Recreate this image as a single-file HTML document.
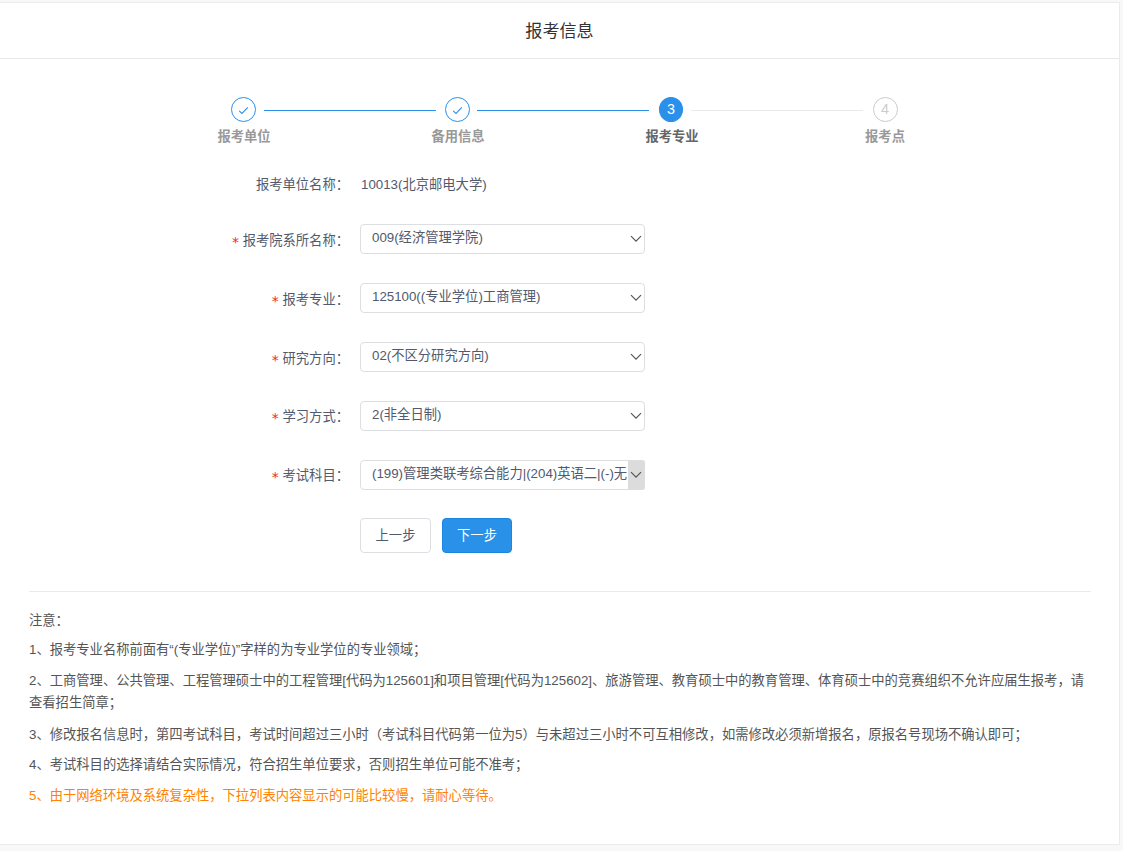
<!DOCTYPE html>
<html lang="zh-CN">
<head>
<meta charset="utf-8">
<title>报考信息</title>
<style>
*{box-sizing:border-box;margin:0;padding:0}
html,body{width:1123px;height:851px;overflow:hidden}
body{background:#f8f8f8;font-family:"Liberation Sans","Noto Sans CJK SC",sans-serif;font-size:13.3px;color:#515a6e;position:relative}
.card{position:absolute;left:-1px;top:2px;width:1121px;height:843px;background:#fff;border:1px solid #ebebeb}
.hd{position:absolute;left:0;top:0;width:1119px;height:54px;border-bottom:1px solid #e8e8e8;text-align:center;font-size:17.1px;line-height:54px;color:#333}
.abs{position:absolute}
/* steps */
.circle{position:absolute;width:25px;height:25px;border-radius:50%;border:1px solid #2b90ea;background:#fff;top:97px;text-align:center;line-height:23px;font-size:14.3px;color:#2b90ea}
.circle.cur{background:#2b90ea;color:#fff}
.circle.wait{border-color:#ccc;color:#ccc}
.line{position:absolute;height:1px;top:110px;background:#2b90ea}
.line.wait{background:#e8eaec}
.slabel{position:absolute;top:127px;width:120px;text-align:center;font-weight:bold;font-size:13.3px;line-height:20px;color:#999}
.slabel.cur{color:#666}
.circle svg{position:absolute;left:6px;top:8px}
/* form */
.lab{position:absolute;left:150px;width:199px;text-align:right;line-height:20px;font-size:13.3px;color:#515a6e;white-space:nowrap}
.lab i{font-style:normal;color:#f22a2a;font-family:"DejaVu Sans",sans-serif;font-size:14px;line-height:1;margin-right:3.7px;position:relative;top:2px}
.val{position:absolute;left:361px;line-height:20px}
.sel{position:absolute;left:360px;width:285px;height:30px;border:1px solid #dcdee2;border-radius:4px;background:#fff;overflow:hidden}
.sel span{position:absolute;left:11px;top:3px;line-height:20px;white-space:nowrap}
.sel svg{position:absolute;right:2px;top:10px}
.sel .gray{position:absolute;right:0;top:0;width:16px;height:100%;background:#dcdcdc}
.btn{position:absolute;top:518px;height:35px;line-height:33px;border:1px solid #dcdee2;border-radius:4px;padding:0;text-align:center;font-size:13.3px;background:#fff;color:#515a6e}
.btn.pri{background:#2a91e8;border-color:#1b86e1;color:#fff}
.hr{position:absolute;left:29px;top:591px;width:1062px;height:1px;background:#e8eaec}
.note{position:absolute;left:29px;width:1062px;line-height:22px;font-size:13.3px;color:#555}
.note.o{color:#ff8200}
</style>
</head>
<body>
<div class="card"></div>
<div class="hd" style="top:5px">报考信息</div>

<!-- steps -->
<div class="line" style="left:264px;width:172px"></div>
<div class="line" style="left:477px;width:172px"></div>
<div class="line wait" style="left:691px;width:172px"></div>

<div class="circle" style="left:231px"><svg width="11" height="9" viewBox="0 0 11 9"><path d="M1.2 4.8 L4 7.4 L9.8 1.4" fill="none" stroke="#2b90ea" stroke-width="1.1"/></svg></div>
<div class="circle" style="left:445px"><svg width="11" height="9" viewBox="0 0 11 9"><path d="M1.2 4.8 L4 7.4 L9.8 1.4" fill="none" stroke="#2b90ea" stroke-width="1.1"/></svg></div>
<div class="circle cur" style="left:658.8px;width:24.4px">3</div>
<div class="circle wait" style="left:872.5px">4</div>

<div class="slabel" style="left:184px">报考单位</div>
<div class="slabel" style="left:398px">备用信息</div>
<div class="slabel cur" style="left:612px">报考专业</div>
<div class="slabel" style="left:825px">报考点</div>

<!-- form -->
<div class="lab" style="top:175px">报考单位名称：</div>
<div class="val" style="top:175px">10013(北京邮电大学)</div>

<div class="lab" style="top:231px"><i>*</i>报考院系所名称：</div>
<div class="sel" style="top:224px"><span>009(经济管理学院)</span><svg width="12" height="8" viewBox="0 0 12 8"><path d="M1 1.2 L6 6.2 L11 1.2" fill="none" stroke="#555" stroke-width="1.2"/></svg></div>

<div class="lab" style="top:290px"><i>*</i>报考专业：</div>
<div class="sel" style="top:283px"><span>125100((专业学位)工商管理)</span><svg width="12" height="8" viewBox="0 0 12 8"><path d="M1 1.2 L6 6.2 L11 1.2" fill="none" stroke="#555" stroke-width="1.2"/></svg></div>

<div class="lab" style="top:349px"><i>*</i>研究方向：</div>
<div class="sel" style="top:342px"><span>02(不区分研究方向)</span><svg width="12" height="8" viewBox="0 0 12 8"><path d="M1 1.2 L6 6.2 L11 1.2" fill="none" stroke="#555" stroke-width="1.2"/></svg></div>

<div class="lab" style="top:407px"><i>*</i>学习方式：</div>
<div class="sel" style="top:401px"><span>2(非全日制)</span><svg width="12" height="8" viewBox="0 0 12 8"><path d="M1 1.2 L6 6.2 L11 1.2" fill="none" stroke="#555" stroke-width="1.2"/></svg></div>

<div class="lab" style="top:466px"><i>*</i>考试科目：</div>
<div class="sel" style="top:460px;border-radius:4px 2px 2px 4px"><span>(199)管理类联考综合能力|(204)英语二|(-)无|(-)无</span><div class="gray"></div><svg width="12" height="8" viewBox="0 0 12 8"><path d="M1 1.2 L6 6.2 L11 1.2" fill="none" stroke="#555" stroke-width="1.2"/></svg></div>

<div class="btn" style="left:360px;width:71px">上一步</div>
<div class="btn pri" style="left:442px;width:70px">下一步</div>

<div class="hr"></div>

<div class="note" style="top:610px">注意：</div>
<div class="note" style="top:639px">1、报考专业名称前面有“(专业学位)”字样的为专业学位的专业领域；</div>
<div class="note" style="top:670px">2、工商管理、公共管理、工程管理硕士中的工程管理[代码为125601]和项目管理[代码为125602]、旅游管理、教育硕士中的教育管理、体育硕士中的竞赛组织不允许应届生报考，请查看招生简章；</div>
<div class="note" style="top:724px">3、修改报名信息时，第四考试科目，考试时间超过三小时（考试科目代码第一位为5）与未超过三小时不可互相修改，如需修改必须新增报名，原报名号现场不确认即可；</div>
<div class="note" style="top:754px">4、考试科目的选择请结合实际情况，符合招生单位要求，否则招生单位可能不准考；</div>
<div class="note o" style="top:785px">5、由于网络环境及系统复杂性，下拉列表内容显示的可能比较慢，请耐心等待。</div>
</body>
</html>
